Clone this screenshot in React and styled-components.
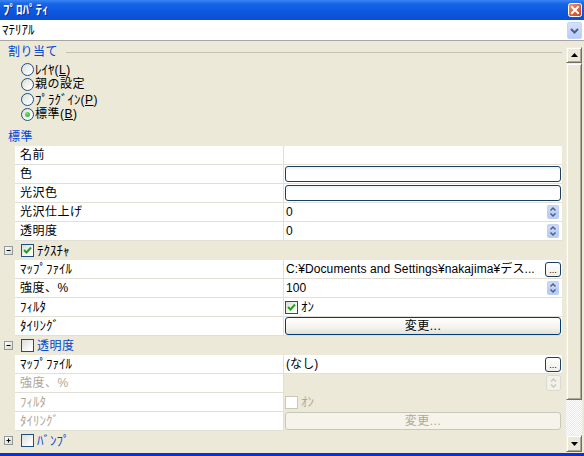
import React from 'react'
import styled, { createGlobalStyle } from 'styled-components'

const GlobalStyle = createGlobalStyle`
  html, body {
    margin: 0;
    padding: 0;
    background: #ece9d8;
  }
  body {
    font-family: "Liberation Sans", "Noto Sans CJK JP", sans-serif;
    font-size: 12px;
    letter-spacing: 0.5px;
    color: #000;
  }
`

const Window = styled.div`
  width: 584px;
  height: 456px;
  box-sizing: border-box;
  display: flex;
  flex-direction: column;
  background: #ece9d8;
  border-bottom: 3px solid #0831d9;
  overflow: hidden;
`

const TitleBar = styled.div`
  flex: none;
  height: 20px;
  box-sizing: border-box;
  padding: 0 2px 1px 3px;
  display: flex;
  align-items: center;
  justify-content: space-between;
  background: linear-gradient(#3a86f4 0%, #1865e8 18%, #0d58e0 55%, #0a4fd4 100%);
  color: #fff;
  font-weight: bold;
  line-height: 18px;
  text-shadow: 1px 1px #0a2a8a;
`

const Combo = styled.div`
  flex: none;
  height: 21px;
  box-sizing: border-box;
  display: flex;
  align-items: center;
  justify-content: space-between;
  padding: 0 2px;
  background: #fff;
  border-bottom: 1px solid #a7a6a0;
  line-height: 18px;
`

const DropButton = styled.div`
  width: 15px;
  height: 17px;
  margin-top: 1px;
  box-sizing: border-box;
  border: 1px solid #c3d3fd;
  border-radius: 2px;
  background: linear-gradient(#d6e1fc, #b7cbf7);
  display: flex;
  align-items: center;
  justify-content: center;
`

// half-width katakana: a touch larger so they read at full height
const Kana = styled.span`
  font-size: 13px;
  letter-spacing: 0;
`

const Body = styled.div`
  flex: 1;
  min-height: 0;
  display: flex;
`

const Content = styled.div`
  flex: 1;
  min-width: 0;
  display: flex;
  flex-direction: column;
`

const GroupHeader = styled.div`
  height: 16px;
  margin-top: 3px;
  padding-left: 8px;
  margin-right: 4px;
  display: flex;
  align-items: center;
  color: #0046d5;
  line-height: 16px;
`

const GroupLine = styled.div`
  flex: 1;
  height: 0;
  margin-left: 8px;
  border-top: 1px solid #c5c2b2;
`

const RadioList = styled.div`
  margin-top: 2px;
  padding-left: 21px;
  display: flex;
  flex-direction: column;
`

const RadioRow = styled.label`
  height: 15px;
  display: flex;
  align-items: center;
  gap: 1px;
  line-height: 15px;
`

const RadioCircle = styled.span`
  width: 13px;
  height: 13px;
  box-sizing: border-box;
  border-radius: 50%;
  border: 1px solid #1c5180;
  background: linear-gradient(135deg, #dcdcd7, #fdfdfc 80%);
  display: flex;
  align-items: center;
  justify-content: center;

  &::after {
    content: '';
    display: ${p => (p.$on ? 'block' : 'none')};
    width: 5px;
    height: 5px;
    border-radius: 50%;
    background: radial-gradient(circle at 35% 35%, #7ae276, #21a121);
  }
`

const SectionTitle = styled.div`
  height: 18px;
  margin-top: 6px;
  padding-left: 8px;
  color: #0046d5;
  line-height: 18px;
`

const Grid = styled.div`
  display: flex;
  flex-direction: column;
`

const PropRow = styled.div`
  height: 19px;
  margin: 0 4px 0 15px;
  display: grid;
  grid-template-columns: 269px 1fr;
`

const NameCell = styled.div`
  box-sizing: border-box;
  padding-left: 5px;
  background: #fff;
  border-right: 1px solid #e2e0d4;
  border-bottom: 1px solid #e2e0d4;
  color: ${p => (p.$disabled ? '#aca899' : '#000')};
  line-height: 18px;
  white-space: nowrap;
`

const ValueCell = styled.div`
  box-sizing: border-box;
  padding-left: 1px;
  display: flex;
  align-items: center;
  background: ${p => (p.$disabled ? 'transparent' : '#fff')};
  border-bottom: 1px solid ${p => (p.$disabled ? 'transparent' : '#e2e0d4')};
  color: ${p => (p.$disabled ? '#aca899' : '#000')};
  line-height: 18px;
  white-space: nowrap;
`

const ValueText = styled.span`
  flex: 1;
  min-width: 0;
  padding-left: 1px;
  letter-spacing: 0.1px;
  overflow: hidden;
`

const TextField = styled.div`
  flex: 1;
  height: 16px;
  margin-right: 1px;
  box-sizing: border-box;
  border: 1px solid #1d3e5e;
  border-radius: 3px;
  background: linear-gradient(#eef3fb, #fff 30%, #fff);
`

const PushButton = styled.div`
  flex: 1;
  height: 18px;
  margin-right: 1px;
  box-sizing: border-box;
  border: 1px solid ${p => (p.$disabled ? '#c9c7ba' : '#003c74')};
  border-radius: 3px;
  background: ${p =>
    p.$disabled
      ? '#f5f4ea'
      : 'linear-gradient(#fff, #f4f3ee 60%, #e3e0d6)'};
  color: ${p => (p.$disabled ? '#aca899' : '#000')};
  text-align: center;
  line-height: 16px;
`

const EllipsisButton = styled.div`
  flex: none;
  width: 16px;
  height: 15px;
  margin-right: 1px;
  box-sizing: border-box;
  border: 1px solid #1d3e5e;
  border-radius: 3px;
  background: linear-gradient(#fff, #f0efe8);
  font-size: 9px;
  letter-spacing: 0;
  line-height: 14px;
  text-align: center;
`

const SpinBox = styled.div`
  flex: none;
  width: ${p => (p.$disabled ? 15 : 12)}px;
  height: ${p => (p.$disabled ? 16 : 14)}px;
  margin-right: ${p => (p.$disabled ? 1 : 3)}px;
  display: flex;
  align-items: center;
  justify-content: center;
`

const CheckBox = styled.span`
  flex: none;
  width: 13px;
  height: 13px;
  box-sizing: border-box;
  border: 1px solid ${p => (p.$disabled ? '#cac8bb' : '#1c5180')};
  background: ${p =>
    p.$disabled ? '#fff' : 'linear-gradient(135deg, #dcdcd7, #fdfdfc 80%)'};
  display: flex;
  align-items: center;
  justify-content: center;
`

const CheckLabel = styled.span`
  margin-left: 3px;
`

const SectionRow = styled.div`
  height: 19px;
  padding-left: 4px;
  display: flex;
  align-items: center;
  color: ${p => (p.$accent ? '#0046d5' : '#000')};
  line-height: 18px;
`

const ExpandBox = styled.span`
  width: 9px;
  height: 9px;
  margin-right: 8px;
  box-sizing: border-box;
  border: 1px solid #919b9c;
  background: linear-gradient(135deg, #fff, #d9d6cb);
  display: flex;
  align-items: center;
  justify-content: center;
`

const SectionLabel = styled.span`
  margin-left: 3px;
`

const ScrollBar = styled.div`
  flex: none;
  width: 16px;
  margin: 6px 2px 1px 0;
  display: flex;
  flex-direction: column;
`

const ScrollPart = styled.div`
  flex: none;
  height: ${p => p.$h}px;
  box-sizing: border-box;
  background: #ece9d8;
  border: 1px solid;
  border-color: #f1efe2 #716f64 #716f64 #f1efe2;
  box-shadow: inset 1px 1px #fff, inset -1px -1px #aca899;
  display: flex;
  align-items: center;
  justify-content: center;
`

const ScrollTrack = styled.div`
  flex: 1;
  background-color: #fff;
  background-image: repeating-conic-gradient(#ece9d8 0 25%, #fff 0 50%);
  background-size: 2px 2px;
`

const CloseIcon = () => (
  <svg width="14" height="14" viewBox="0 0 14 14">
    <defs>
      <linearGradient id="closeFill" x1="0" y1="0" x2="1" y2="1">
        <stop offset="0" stopColor="#f09a7a" />
        <stop offset="0.5" stopColor="#e0633c" />
        <stop offset="1" stopColor="#c2411c" />
      </linearGradient>
    </defs>
    <rect x="0.5" y="0.5" width="13" height="13" rx="2" fill="url(#closeFill)" stroke="#fff" />
    <path d="M4 4 L10 10 M10 4 L4 10" stroke="#fff" strokeWidth="2" strokeLinecap="square" />
  </svg>
)

const Chevron = () => (
  <svg width="9" height="6" viewBox="0 0 9 6">
    <path d="M1 1 L4.5 4.5 L8 1" fill="none" stroke="#4d6185" strokeWidth="2" />
  </svg>
)

const Arrow = ({ up }) => (
  <svg width="7" height="4" viewBox="0 0 7 4">
    <path d={up ? 'M0 4 L3.5 0 L7 4 Z' : 'M0 0 L3.5 4 L7 0 Z'} fill="#000" />
  </svg>
)

const Spinner = ({ disabled }) => (
  <SpinBox $disabled={disabled}>
    {disabled ? (
      <svg width="15" height="16" viewBox="0 0 15 16">
        <rect x="0.5" y="0.5" width="14" height="15" rx="2" fill="#f3f2ea" stroke="#dcdad0" />
        <path d="M5 6.5 L7.5 4 L10 6.5 M5 9.5 L7.5 12 L10 9.5" fill="none" stroke="#c9c7ba" strokeWidth="1.4" />
      </svg>
    ) : (
      <svg width="12" height="14" viewBox="0 0 12 14">
        <rect x="0" y="0" width="12" height="14" rx="2" fill="#bccdf5" />
        <rect x="0.5" y="0.5" width="11" height="6" rx="1.5" fill="#cad8f8" />
        <path d="M3.5 5.5 L6 3 L8.5 5.5 M3.5 8.5 L6 11 L8.5 8.5" fill="none" stroke="#4d6185" strokeWidth="1.5" />
      </svg>
    )}
  </SpinBox>
)

const Check = ({ checked, disabled }) => (
  <CheckBox $disabled={disabled}>
    {checked && (
      <svg width="9" height="9" viewBox="0 0 9 9">
        <path d="M1 4 L3.5 6.5 L8 1.5" fill="none" stroke="#21a121" strokeWidth="2" />
      </svg>
    )}
  </CheckBox>
)

const Expander = ({ open }) => (
  <ExpandBox>
    <svg width="7" height="7" viewBox="0 0 7 7">
      <path d={open ? 'M1.5 3.5 H5.5' : 'M1.5 3.5 H5.5 M3.5 1.5 V5.5'} stroke="#000" strokeWidth="1" />
    </svg>
  </ExpandBox>
)

const Radio = ({ on, children }) => (
  <RadioRow>
    <RadioCircle $on={on} />
    <span>{children}</span>
  </RadioRow>
)

const Prop = ({ name, disabled, children }) => (
  <PropRow>
    <NameCell $disabled={disabled}>{name}</NameCell>
    <ValueCell $disabled={disabled}>{children}</ValueCell>
  </PropRow>
)

const Section = ({ open, checked, accent, children }) => (
  <SectionRow $accent={accent}>
    <Expander open={open} />
    <Check checked={checked} />
    <SectionLabel>{children}</SectionLabel>
  </SectionRow>
)

export default function App() {
  return (
    <>
      <GlobalStyle />
      <Window>
        <TitleBar>
          <Kana>ﾌﾟﾛﾊﾟﾃｨ</Kana>
          <CloseIcon />
        </TitleBar>

        <Combo>
          <Kana>ﾏﾃﾘｱﾙ</Kana>
          <DropButton>
            <Chevron />
          </DropButton>
        </Combo>

        <Body>
          <Content>
            <GroupHeader>
              <span>割り当て</span>
              <GroupLine />
            </GroupHeader>
            <RadioList>
              <Radio><Kana>ﾚｲﾔ</Kana>(<u>L</u>)</Radio>
              <Radio>親の設定</Radio>
              <Radio><Kana>ﾌﾟﾗｸﾞｲﾝ</Kana>(<u>P</u>)</Radio>
              <Radio on>標準(<u>B</u>)</Radio>
            </RadioList>

            <SectionTitle>標準</SectionTitle>
            <Grid>
              <Prop name="名前" />
              <Prop name="色"><TextField /></Prop>
              <Prop name="光沢色"><TextField /></Prop>
              <Prop name="光沢仕上げ">
                <ValueText>0</ValueText>
                <Spinner />
              </Prop>
              <Prop name="透明度">
                <ValueText>0</ValueText>
                <Spinner />
              </Prop>

              <Section open checked><Kana>ﾃｸｽﾁｬ</Kana></Section>
              <Prop name={<Kana>ﾏｯﾌﾟﾌｧｲﾙ</Kana>}>
                <ValueText>C:¥Documents and Settings¥nakajima¥デス...</ValueText>
                <EllipsisButton>...</EllipsisButton>
              </Prop>
              <Prop name="強度、%">
                <ValueText>100</ValueText>
                <Spinner />
              </Prop>
              <Prop name={<Kana>ﾌｨﾙﾀ</Kana>}>
                <Check checked />
                <CheckLabel><Kana>ｵﾝ</Kana></CheckLabel>
              </Prop>
              <Prop name={<Kana>ﾀｲﾘﾝｸﾞ</Kana>}>
                <PushButton>変更...</PushButton>
              </Prop>

              <Section open accent>透明度</Section>
              <Prop name={<Kana>ﾏｯﾌﾟﾌｧｲﾙ</Kana>}>
                <ValueText>(なし)</ValueText>
                <EllipsisButton>...</EllipsisButton>
              </Prop>
              <Prop name="強度、%" disabled>
                <ValueText />
                <Spinner disabled />
              </Prop>
              <Prop name={<Kana>ﾌｨﾙﾀ</Kana>} disabled>
                <Check disabled />
                <CheckLabel><Kana>ｵﾝ</Kana></CheckLabel>
              </Prop>
              <Prop name={<Kana>ﾀｲﾘﾝｸﾞ</Kana>} disabled>
                <PushButton $disabled>変更...</PushButton>
              </Prop>

              <Section accent><Kana>ﾊﾞﾝﾌﾟ</Kana></Section>
            </Grid>
          </Content>

          <ScrollBar>
            <ScrollPart $h={16}><Arrow up /></ScrollPart>
            <ScrollPart $h={337} />
            <ScrollTrack />
            <ScrollPart $h={17}><Arrow /></ScrollPart>
          </ScrollBar>
        </Body>
      </Window>
    </>
  )
}
